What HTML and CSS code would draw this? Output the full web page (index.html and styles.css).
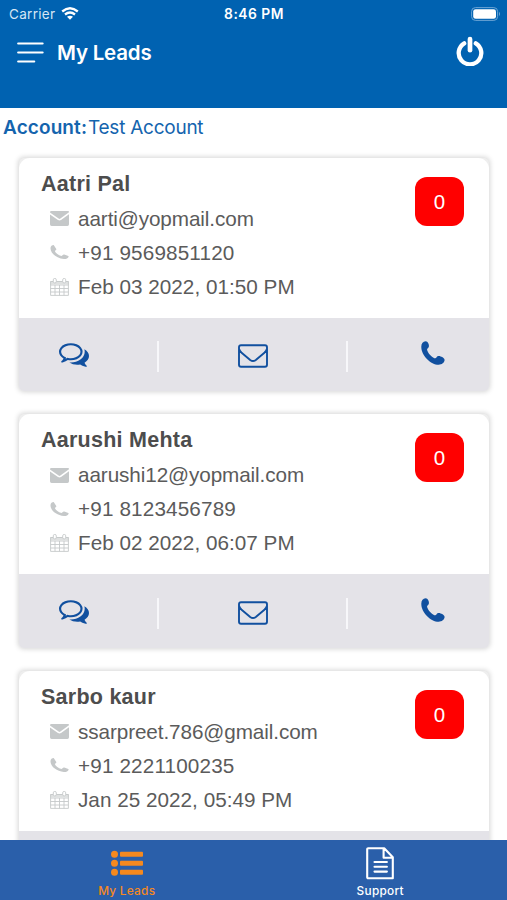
FILE: index.html
```html
<!DOCTYPE html>
<html lang="en">
<head>
<meta charset="utf-8">
<title>My Leads</title>
<link rel="stylesheet" href="styles.css">
</head>
<body>
<svg class="defs" aria-hidden="true">
  <symbol id="mail-solid" viewBox="0 0 19 15"><path d="M1.200 0h16.600C18.700 0 19 .6 19 1.200L10.400 7.600q-.9.6-1.800 0L0 1.600C0 .6.5 0 1.200 0z"/><path d="M0 3.500l8 5.600q1.500.9 3 0l8-5.800v10q0 1.600-1.600 1.600H1.600Q0 14.900 0 13.300z"/></symbol>
  <symbol id="phone-thin" viewBox="0 0 19 15"><path d="M.5 3C.6 1.300 2 .2 3.700.1l2.600 3.800q.3.6-.3 1L4.800 5.900Q6.500 9.500 11.500 11l1.700-1.300q.5-.4 1.100-.1l4 1.500q.5.3.2.9c-1 1.700-2.500 2.200-4.600 2C6.500 13.300.2 8.300.5 3z"/></symbol>
  <symbol id="calendar" viewBox="0 0 19 18"><path d="M.6 3.500h17.800v13.900H.6zM.6 7h17.800M.6 10.500h17.800M.6 14h17.800M5 7v10.400M9.500 7v10.400M14 7v10.400" fill="none" stroke="currentColor" stroke-width=".9"/><path d="M.3 3h18.400v3.200H.3z" opacity=".55"/><rect x="3.300" y=".5" width="3" height="4.400" rx="1.300" fill="#fff" stroke="currentColor" stroke-width=".9"/><rect x="12.700" y=".5" width="3" height="4.400" rx="1.300" fill="#fff" stroke="currentColor" stroke-width=".9"/></symbol>
  <symbol id="comments" viewBox="0 256 1792 1408"><path d="M704 384q-153 0-286 52t-211.500 141-78.500 191q0 82 53 158t149 132l97 56-35 84q34-20 62-39l44-31 53 10q78 14 153 14 153 0 286-52t211.500-141 78.500-191-78.500-191-211.500-141-286-52zm0-128q191 0 353.500 68.500t256.500 186.500 94 257-94 257-256.500 186.500-353.500 68.500q-86 0-176-16-124 88-278 128-36 9-86 16h-3q-11 0-20.500-8t-11.500-21q-1-3-1-6.500t.5-6.500 2-6l2.500-5 3.500-5.500 4-5 4.500-5 4-4.500q5-6 23-25t26-29.500 22.500-29 25-38.500 20.500-44q-124-72-195-177t-71-224q0-139 94-257t256.500-186.500 353.500-68.500zm822 1169q10 24 20.500 44t25 38.500 22.500 29 26 29.500 23 25q1 1 4 4.500t4.500 5 4 5 3.500 5.500l2.500 5 2 6 .5 6.500-1 6.500q-3 14-13 22t-22 7q-50-7-86-16-154-40-278-128-90 16-176 16-271 0-472-132 58 4 88 4 161 0 309-45t264-129q125-92 192-212t67-254q0-77-23-152 129 71 204 178t75 230q0 120-71 224.500t-195 176.500z"/></symbol>
  <symbol id="mail-outline" viewBox="0 0 30 24"><path d="M3 1.200h24q2 0 2 2v17.600q0 2-2 2H3q-2 0-2-2V3.200q0-2 2-2zM1 4.800q.6 2.200 2.600 3.900l8.600 7.200q2.800 2.200 5.600 0l8.600-7.200Q28.400 7 29 4.800" fill="none" stroke="currentColor" stroke-width="1.900" stroke-linejoin="round"/></symbol>
  <symbol id="phone" viewBox="0 0 24 24"><path d="M.3 5.400C.4 2.400 2.100.2 4.500.2c1.600 0 2.600 1.200 3.100 2.800.6 1.900.4 3.200-.5 3.900-.9.700-1.200 1.300-.9 2.400C7 12.200 10.300 15.900 13.300 17.200c1.100.4 1.800.1 2.300-.9.700-1.300 2.100-1.500 4-.9 2.300.7 4.100 1.900 4 3.600-.2 2.700-2.800 4.700-6 4.700C10 23.700.1 14.500.3 5.400z"/></symbol>
</svg>

<div class="app">
  <header class="header">
    <div class="status">
      <div class="carrier"><span>Carrier</span>
        <svg class="wifi" viewBox="0 0 18 13"><path d="M1.200 4.500q7.800-6.500 15.600 0M4 7.500q5-4 10 0" fill="none" stroke="#fff" stroke-width="2.300"/><path d="M6 9.800q3-2.300 6 0L9 12.800z" fill="#fff"/></svg>
      </div>
      <div class="clock">8:46 PM</div>
      <svg class="battery" viewBox="0 0 30 14"><rect x=".6" y=".6" width="26" height="12.800" rx="3.800" fill="none" stroke="#6ba4d4" stroke-width="1"/><rect x="2.200" y="2.200" width="22.800" height="9.600" rx="2.400" fill="#fff"/><path d="M28 4.800q2 2.200 0 4.400z" fill="#6ba4d4"/></svg>
    </div>
    <div class="titlebar">
      <svg class="menu" viewBox="0 0 27 22"><path d="M1.200 1.500h24.400M1.200 10.500h24.400M1.200 19.500h16" stroke="#fff" stroke-width="2.200" stroke-linecap="round"/></svg>
      <h1>My Leads</h1>
      <svg class="power" viewBox="0 0 28 30"><path d="M8.200 7.300a11.300 11.300 0 1 0 11.600 0" fill="none" stroke="#fff" stroke-width="4.300" stroke-linecap="round"/><path d="M14 3v11.200" stroke="#fff" stroke-width="4.700" stroke-linecap="round"/></svg>
    </div>
  </header>

  <main class="content">
    <p class="account"><b>Account:</b><span>Test Account</span></p>

    <article class="card">
      <div class="info">
        <div>
          <h2>Aatri Pal</h2>
          <p><svg class="i-mail"><use href="#mail-solid"/></svg><span>aarti@yopmail.com</span></p>
          <p><svg class="i-phone"><use href="#phone-thin"/></svg><span class="num">+91 9569851120</span></p>
          <p><svg class="i-cal"><use href="#calendar"/></svg><span class="date">Feb 03 2022, 01:50 PM</span></p>
        </div>
        <div class="count">0</div>
      </div>
      <div class="actions">
        <svg class="a-chat"><use href="#comments"/></svg><i></i>
        <svg class="a-mail"><use href="#mail-outline"/></svg><i></i>
        <svg class="a-call"><use href="#phone"/></svg>
      </div>
    </article>

    <article class="card">
      <div class="info">
        <div>
          <h2>Aarushi Mehta</h2>
          <p><svg class="i-mail"><use href="#mail-solid"/></svg><span>aarushi12@yopmail.com</span></p>
          <p><svg class="i-phone"><use href="#phone-thin"/></svg><span class="num">+91 8123456789</span></p>
          <p><svg class="i-cal"><use href="#calendar"/></svg><span class="date">Feb 02 2022, 06:07 PM</span></p>
        </div>
        <div class="count">0</div>
      </div>
      <div class="actions">
        <svg class="a-chat"><use href="#comments"/></svg><i></i>
        <svg class="a-mail"><use href="#mail-outline"/></svg><i></i>
        <svg class="a-call"><use href="#phone"/></svg>
      </div>
    </article>

    <article class="card">
      <div class="info">
        <div>
          <h2>Sarbo kaur</h2>
          <p><svg class="i-mail"><use href="#mail-solid"/></svg><span>ssarpreet.786@gmail.com</span></p>
          <p><svg class="i-phone"><use href="#phone-thin"/></svg><span class="num">+91 2221100235</span></p>
          <p><svg class="i-cal"><use href="#calendar"/></svg><span class="date">Jan 25 2022, 05:49 PM</span></p>
        </div>
        <div class="count">0</div>
      </div>
      <div class="actions"></div>
    </article>
  </main>

  <nav class="tabs">
    <a class="tab active">
      <svg viewBox="0 0 34 34"><g fill="currentColor"><circle cx="4.500" cy="8.300" r="3.500"/><circle cx="4.500" cy="17.300" r="3.500"/><circle cx="4.500" cy="26.300" r="3.500"/><rect x="10" y="5.800" width="23" height="5" rx="1"/><rect x="10" y="14.800" width="23" height="5" rx="1"/><rect x="10" y="23.800" width="23" height="5" rx="1"/></g></svg>
      <span>My Leads</span>
    </a>
    <a class="tab">
      <svg viewBox="0 0 34 34"><path d="M5.200 2.200h16l8.600 9v21H5.200q-1 0-1-1v-28q0-1 1-1zM20.600 2.200v9.600h9.200M11.500 16h12.400M11.500 20.800h12.400M11.500 25.600h12.400" fill="none" stroke="currentColor" stroke-width="2.100" stroke-linecap="round" stroke-linejoin="round"/></svg>
      <span>Support</span>
    </a>
  </nav>
</div>
</body>
</html>
```
FILE: styles.css
```css
* { box-sizing: border-box; }
body { margin: 0; background: #fff; font-family: Inter, sans-serif; }
h1, h2, p { margin: 0; }
svg { display: block; flex: none; fill: currentColor; }
.defs { display: none; }

.app { display: flex; flex-direction: column; width: 507px; height: 900px; overflow: hidden; }

.header { flex: none; height: 108px; background: #0062b1; color: #fff; }
.status { display: grid; grid-template-columns: 1fr auto 1fr; align-items: center; height: 27px; padding: 0 7px 0 9px; }
.carrier { display: flex; align-items: center; gap: 6px; font-size: 13.500px; line-height: 28px; letter-spacing: .3px; color: #d5e6f4; }
.wifi { width: 18px; height: 13px; margin-top: -1px; }
.clock { font-size: 13.800px; font-weight: 600; line-height: 28px; letter-spacing: .5px; margin-left: -1px; }
.battery { width: 30px; height: 14px; justify-self: end; margin-right: -1px; }
.titlebar { display: flex; align-items: center; height: 51px; padding: 0 23px 0 17px; }
.menu { width: 27px; height: 22px; }
.titlebar h1 { margin-left: 13px; font-size: 20.500px; font-weight: 600; line-height: 51px; letter-spacing: -.2px; }
.power { width: 28px; height: 30px; margin-left: auto; margin-top: -3px; }

.content { flex: 1; min-height: 0; overflow: hidden; }
.account { display: flex; height: 49.500px; padding-left: 3px; font-size: 19px; line-height: 39px; color: #1464ae; }
.account b { width: 85px; font-weight: 600; letter-spacing: .1px; }
.account span { letter-spacing: -.25px; }

.card { width: 470px; height: 233.500px; margin: 0 0 23px 19px; border-radius: 5px; background: #eee; box-shadow: 0 0 5px 1px rgba(0, 0, 0, .17); overflow: hidden; }
.info { display: flex; justify-content: space-between; height: 160px; padding: 9px 25px 0 22px; border-radius: 11px 11px 0 0; background: #fff; font-family: "Liberation Sans", Arial, sans-serif; color: #5b5b5b; }
.info h2 { height: 35px; font-size: 21.500px; font-weight: 700; line-height: 34px; letter-spacing: .25px; color: #4d4d4d; }
.info p { display: flex; align-items: center; height: 34px; padding-left: 9px; gap: 9px; font-size: 20.700px; line-height: 34px; letter-spacing: -.09px; white-space: nowrap; }
.info .num { letter-spacing: .15px; }
.info .date { letter-spacing: .02px; }
.info p svg { width: 19px; color: #c5c8c9; }
.i-mail { height: 15px; }
.i-phone { height: 15px; }
.i-cal { height: 18px; }
.count { width: 49px; height: 49px; margin-top: 10px; border-radius: 12px; background: #f00; color: #fff; font-size: 20.500px; line-height: 50px; text-align: center; }
.actions { display: flex; align-items: center; height: 73.500px; padding: 0 0 0 40px; background: #e4e3e8; border-radius: 0 0 4px 4px; color: #11509f; }
.actions i { width: 2px; height: 31px; background: #f7f7fa; margin: 5px 79px 0 68px; }
.actions .a-mail + i { margin: 5px 73px 0 78px; }
.a-chat { width: 30px; height: 24px; margin-top: 2px; }
.a-mail { width: 30px; height: 24px; margin-top: 4px; }
.a-call { width: 24px; height: 24px; margin-top: -2px; }

.tabs { flex: none; display: flex; height: 60px; background: #2a5faa; }
.tab { flex: 1; display: flex; flex-direction: column; align-items: center; padding-top: 6px; color: #fff; font-size: 11.800px; font-weight: 500; line-height: 18px; letter-spacing: .3px; }
.tab svg { width: 34px; height: 34px; margin-bottom: 2px; }
.tab.active { color: #f5891f; }
```
